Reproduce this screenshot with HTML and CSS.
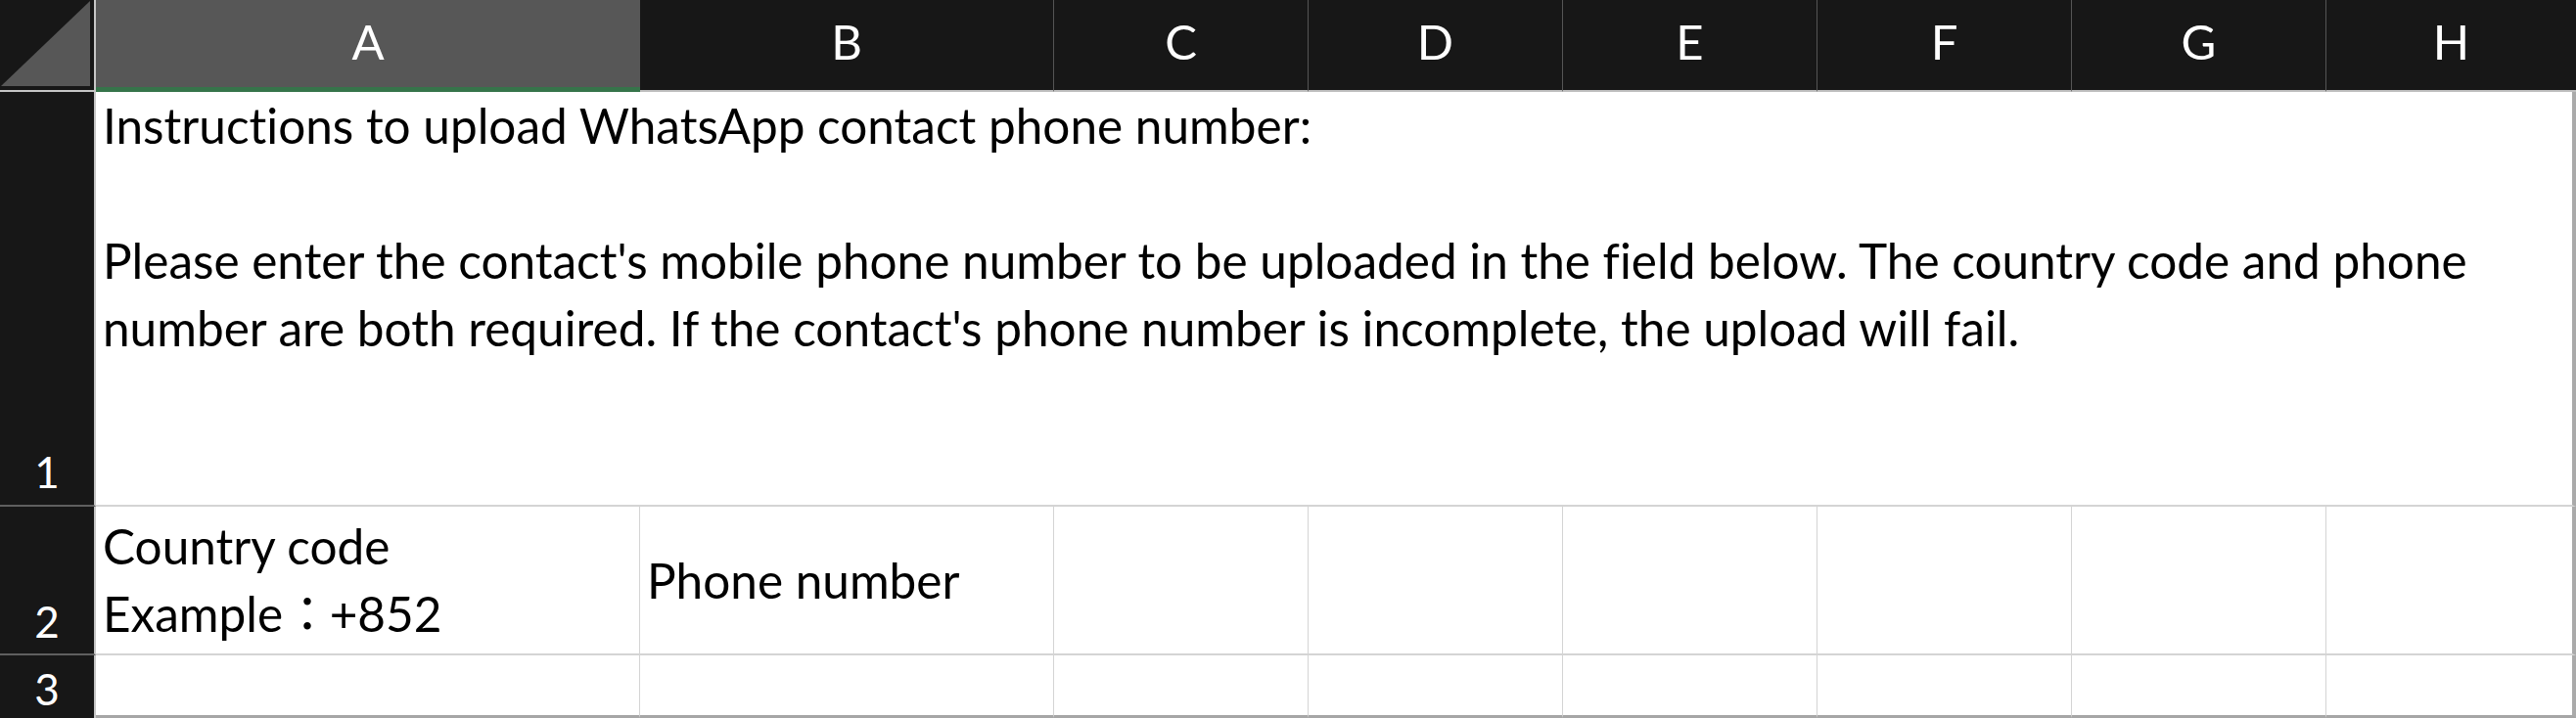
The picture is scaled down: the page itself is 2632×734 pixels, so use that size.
FILE: index.html
```html
<!DOCTYPE html>
<html lang="en">
<head>
<meta charset="utf-8">
<title>Sheet</title>
<link rel="stylesheet" href="styles.css">
</head>
<body>
<div class="sheet">
  <div class="corner"><svg class="corner-tri" width="96" height="92" viewBox="0 0 96 92"><polygon points="1,88 92,1 92,88" fill="#575757"/></svg></div>
  <div class="colhead selected">A</div>
  <div class="colhead">B</div>
  <div class="colhead">C</div>
  <div class="colhead">D</div>
  <div class="colhead">E</div>
  <div class="colhead">F</div>
  <div class="colhead">G</div>
  <div class="colhead last">H</div>

  <div class="rowhead r1">1</div>
  <div class="cell merged end"><div class="text">Instructions to upload WhatsApp contact phone number:<br><br>Please enter the contact's mobile phone number to be uploaded in the field below. The country code and phone<br>number are both required. If the contact's phone number is incomplete, the upload will fail.</div></div>

  <div class="rowhead r2">2</div>
  <div class="cell mid"><div class="text">Country code<br>Example<span class="fw">：</span>+852</div></div>
  <div class="cell mid"><div class="text">Phone number</div></div>
  <div class="cell"></div>
  <div class="cell"></div>
  <div class="cell"></div>
  <div class="cell"></div>
  <div class="cell"></div>
  <div class="cell end"></div>

  <div class="rowhead r3">3</div>
  <div class="cell bottom"></div>
  <div class="cell bottom"></div>
  <div class="cell bottom"></div>
  <div class="cell bottom"></div>
  <div class="cell bottom"></div>
  <div class="cell bottom"></div>
  <div class="cell bottom"></div>
  <div class="cell bottom end"></div>
</div>
</body>
</html>
```
FILE: styles.css
```css
* { box-sizing: border-box; }
html, body {
  margin: 0;
  padding: 0;
  width: 2632px;
  height: 734px;
  overflow: hidden;
  background: #ffffff;
}
.sheet {
  display: grid;
  grid-template-columns: 98px 556px 423px 260px 260px 260px 260px 260px 255px;
  grid-template-rows: 94px 424px 152px 64px;
  width: 2632px;
  height: 734px;
  font-family: "Lato", "Noto Sans CJK TC", sans-serif;
  font-variant-ligatures: none;
}
.corner {
  background: #171717;
  border-right: 2px solid #c6c6c6;
  border-bottom: 2px solid #c6c6c6;
}
.corner-tri { display: block; }
.colhead {
  background: #171717;
  color: #ffffff;
  font-size: 49px;
  line-height: 1;
  display: flex;
  align-items: center;
  justify-content: center;
  padding-bottom: 8px;
  border-right: 1px solid #555555;
  border-bottom: 2px solid #bfbfbf;
}
.colhead.selected {
  background: #575757;
  border-right: none;
  border-bottom: 2px solid #36744a;
  box-shadow: inset 0 -3px 0 #36744a;
}
.colhead.last { border-right: none; }
.rowhead {
  background: #171717;
  color: #ffffff;
  font-size: 44px;
  line-height: 1;
  display: flex;
  align-items: flex-end;
  justify-content: center;
  border-right: 2px solid #c6c6c6;
}
.rowhead.r1 { padding-bottom: 12px; border-bottom: 2px solid #5f5f5f; }
.rowhead.r2 { padding-bottom: 11px; border-bottom: 2px solid #5f5f5f; }
.rowhead.r3 { padding-bottom: 8px; }
.cell {
  background: #ffffff;
  color: #000000;
  font-size: 49.5px;
  line-height: 69px;
  border-right: 1px solid #d4d4d4;
  border-bottom: 2px solid #d4d4d4;
  padding: 0 7px;
  white-space: nowrap;
  overflow: hidden;
}
.cell.merged { grid-column: 2 / span 8; }
.cell.mid {
  display: flex;
  align-items: center;
}
.cell.end { border-right: 4px solid #aaaaaa; }
.cell.bottom { border-bottom: 3px solid #a6a6a6; }
.fw { margin: 0 -2px 0 0; }
```
